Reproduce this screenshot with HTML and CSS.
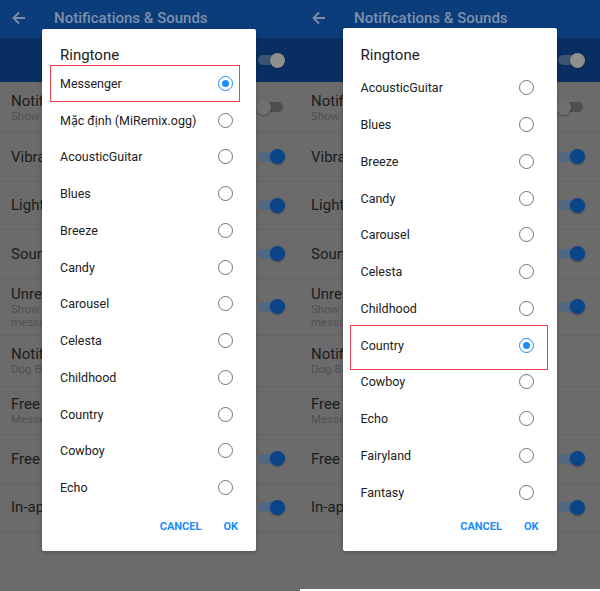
FILE: index.html
```html
<!DOCTYPE html>
<html lang="en">
<head>
  <meta charset="UTF-8">
  <meta name="viewport" content="width=device-width, initial-scale=1.0">
  <title>Ringtone picker</title>
  <link rel="stylesheet" href="styles.css">
</head>
<body>

  <div class="screens">

    <!-- Left screen: Messenger selected -->
    <div class="phone">
      <header class="appbar">
        <svg class="back" width="14" height="14" viewBox="0 0 14 14"><path d="M13 7H2M7 1.5L1.5 7 7 12.5" fill="none" stroke="currentColor" stroke-width="1.8"/></svg>
        <span class="appbar-title">Notifications &amp; Sounds</span>
      </header>
      <div class="master"><span class="switch switch-idle"></span></div>

      <ul class="prefs">
        <li class="pref pref-two">
          <div><div class="pref-title">Notifications</div><div class="pref-sub">Show notifications</div></div>
          <span class="switch switch-off"></span>
        </li>
        <li class="pref"><div class="pref-title">Vibrate</div><span class="switch"></span></li>
        <li class="pref"><div class="pref-title">Light</div><span class="switch"></span></li>
        <li class="pref"><div class="pref-title">Sound</div><span class="switch"></span></li>
        <li class="pref pref-three">
          <div><div class="pref-title">Unread count</div><div class="pref-sub">Show count of unread<br>messages on app icon</div></div>
          <span class="switch"></span>
        </li>
        <li class="pref pref-two">
          <div><div class="pref-title">Notification sound</div><div class="pref-sub">Dog Bark</div></div>
        </li>
        <li class="pref">
          <div><div class="pref-title">Free call ringtone</div><div class="pref-sub">Messenger</div></div>
        </li>
        <li class="pref"><div class="pref-title">Free call vibration</div><span class="switch"></span></li>
        <li class="pref"><div class="pref-title">In-app sounds</div><span class="switch"></span></li>
      </ul>

      <div class="dialog">
        <div class="dialog-title">Ringtone</div>
        <ul class="choices">
          <li class="choice"><span>Messenger</span><span class="radio radio-on"></span><span class="mark mark-first"></span></li>
          <li class="choice"><span>Mặc định (MiRemix.ogg)</span><span class="radio"></span></li>
          <li class="choice"><span>AcousticGuitar</span><span class="radio"></span></li>
          <li class="choice"><span>Blues</span><span class="radio"></span></li>
          <li class="choice"><span>Breeze</span><span class="radio"></span></li>
          <li class="choice"><span>Candy</span><span class="radio"></span></li>
          <li class="choice"><span>Carousel</span><span class="radio"></span></li>
          <li class="choice"><span>Celesta</span><span class="radio"></span></li>
          <li class="choice"><span>Childhood</span><span class="radio"></span></li>
          <li class="choice"><span>Country</span><span class="radio"></span></li>
          <li class="choice"><span>Cowboy</span><span class="radio"></span></li>
          <li class="choice"><span>Echo</span><span class="radio"></span></li>
        </ul>
        <div class="dialog-actions">
          <button class="action">CANCEL</button>
          <button class="action">OK</button>
        </div>
      </div>
    </div>

    <!-- Right screen: scrolled, Country selected -->
    <div class="phone phone-short">
      <header class="appbar">
        <svg class="back" width="14" height="14" viewBox="0 0 14 14"><path d="M13 7H2M7 1.5L1.5 7 7 12.5" fill="none" stroke="currentColor" stroke-width="1.8"/></svg>
        <span class="appbar-title">Notifications &amp; Sounds</span>
      </header>
      <div class="master"><span class="switch switch-idle"></span></div>

      <ul class="prefs">
        <li class="pref pref-two">
          <div><div class="pref-title">Notifications</div><div class="pref-sub">Show notifications</div></div>
          <span class="switch switch-off"></span>
        </li>
        <li class="pref"><div class="pref-title">Vibrate</div><span class="switch"></span></li>
        <li class="pref"><div class="pref-title">Light</div><span class="switch"></span></li>
        <li class="pref"><div class="pref-title">Sound</div><span class="switch"></span></li>
        <li class="pref pref-three">
          <div><div class="pref-title">Unread count</div><div class="pref-sub">Show count of unread<br>messages on app icon</div></div>
          <span class="switch"></span>
        </li>
        <li class="pref pref-two">
          <div><div class="pref-title">Notification sound</div><div class="pref-sub">Dog Bark</div></div>
        </li>
        <li class="pref">
          <div><div class="pref-title">Free call ringtone</div><div class="pref-sub">Messenger</div></div>
        </li>
        <li class="pref"><div class="pref-title">Free call vibration</div><span class="switch"></span></li>
        <li class="pref"><div class="pref-title">In-app sounds</div><span class="switch"></span></li>
      </ul>

      <div class="dialog dialog-up">
        <div class="dialog-title">Ringtone</div>
        <ul class="choices choices-scrolled">
          <li class="choice"><span>AcousticGuitar</span><span class="radio"></span></li>
          <li class="choice"><span>Blues</span><span class="radio"></span></li>
          <li class="choice"><span>Breeze</span><span class="radio"></span></li>
          <li class="choice"><span>Candy</span><span class="radio"></span></li>
          <li class="choice"><span>Carousel</span><span class="radio"></span></li>
          <li class="choice"><span>Celesta</span><span class="radio"></span></li>
          <li class="choice"><span>Childhood</span><span class="radio"></span></li>
          <li class="choice"><span>Country</span><span class="radio radio-on"></span><span class="mark mark-wide"></span></li>
          <li class="choice"><span>Cowboy</span><span class="radio"></span></li>
          <li class="choice"><span>Echo</span><span class="radio"></span></li>
          <li class="choice"><span>Fairyland</span><span class="radio"></span></li>
          <li class="choice"><span>Fantasy</span><span class="radio"></span></li>
        </ul>
        <div class="dialog-actions">
          <button class="action">CANCEL</button>
          <button class="action">OK</button>
        </div>
      </div>
    </div>

  </div>

</body>
</html>
```

FILE: styles.css
```css
body {
  margin: 0;
  padding: 0;
  background: #ffffff;
  font-family: Roboto, "Noto Sans", sans-serif;
}

.screens {
  display: flex;
  width: 600px;
  height: 591px;
}

.phone {
  width: 300px;
  height: 591px;
  background: #6b6b6b;
  position: relative;
  overflow: hidden;
  display: flex;
  flex-direction: column;
}

.phone-short {
  height: 589px;
}

/* dimmed app bar */
.appbar {
  height: 38px;
  flex-shrink: 0;
  background: #0b3d7b;
  color: #7b8fab;
  display: flex;
  align-items: center;
  padding-bottom: 3px;
  box-sizing: border-box;
}

.back {
  margin-left: 12px;
  width: 14px;
  height: 14px;
}

.appbar-title {
  margin-left: 28px;
  font-size: 15px;
  font-weight: 500;
}

.master {
  height: 44px;
  flex-shrink: 0;
  background: #092f62;
  display: flex;
  align-items: center;
  justify-content: flex-end;
  padding-right: 17px;
}

.prefs {
  list-style: none;
  margin: 0;
  padding: 0;
}

.pref {
  height: 48.5px;
  box-sizing: border-box;
  border-bottom: 1px solid #646464;
  display: flex;
  align-items: center;
  justify-content: space-between;
  padding: 0 17px 0 11px;
}

.pref-two {
  height: 51px;
}

.pref-three {
  height: 57px;
}

.pref-title {
  font-size: 15px;
  line-height: 18px;
  color: #1c1c1c;
}

.pref-sub {
  font-size: 11.5px;
  line-height: 13px;
  color: #525252;
}

/* toggles */
.switch {
  position: relative;
  width: 25px;
  height: 10px;
  border-radius: 5px;
  background: #4f6985;
  flex-shrink: 0;
}

.switch::after {
  content: "";
  position: absolute;
  top: -2.5px;
  right: -2px;
  width: 15px;
  height: 15px;
  border-radius: 50%;
  background: #0a4589;
  box-shadow: 0 1px 2px rgba(0, 0, 0, 0.3);
}

.switch-off {
  background: #4e4e4e;
}

.switch-off::after {
  right: auto;
  left: -2px;
  background: #707070;
}

.switch-idle {
  background: #3b5473;
}

.switch-idle::after {
  background: #8f8f8f;
}

/* dialog */
.dialog {
  position: absolute;
  top: 29px;
  left: 42px;
  width: 214px;
  background: #ffffff;
  border-radius: 2px;
  box-shadow: 0 1px 4px rgba(0, 0, 0, 0.25);
  display: flex;
  flex-direction: column;
}

.dialog-up {
  top: 28px;
  left: 42.5px;
}

.dialog-title {
  padding: 16px 18px 0;
  font-size: 15px;
  line-height: 20px;
  color: #212121;
}

.dialog-up .dialog-title {
  padding-top: 17px;
}

.choices {
  list-style: none;
  margin: 0;
  padding: 0;
  height: 443px;
  overflow: hidden;
}

.choices-scrolled {
  padding-top: 4.5px;
  box-sizing: border-box;
}

.choice {
  position: relative;
  height: 36.75px;
  display: flex;
  align-items: center;
  justify-content: space-between;
  padding: 0 23px 0 18px;
  font-size: 12.5px;
  color: #212121;
}

.radio {
  width: 15px;
  height: 15px;
  box-sizing: border-box;
  border: 1.7px solid #737373;
  border-radius: 50%;
  display: flex;
  align-items: center;
  justify-content: center;
}

.radio-on {
  border-color: #1a8cff;
}

.radio-on::after {
  content: "";
  width: 7px;
  height: 7px;
  border-radius: 50%;
  background: #1a8cff;
}

/* red annotation box */
.mark {
  position: absolute;
  border: 1.5px solid #e8434f;
}

.mark-first {
  top: -0.5px;
  left: 8px;
  right: 16px;
  height: 37px;
  box-sizing: border-box;
}

.mark-wide {
  top: -2px;
  left: 7px;
  right: 9px;
  height: 45px;
  box-sizing: border-box;
}

.dialog-actions {
  display: flex;
  justify-content: flex-end;
  gap: 22px;
  padding: 10px 18px 15px;
}

.action {
  border: none;
  background: none;
  padding: 0;
  font-family: Roboto, "Noto Sans", sans-serif;
  font-size: 11px;
  line-height: 18px;
  font-weight: 700;
  color: #1a8cff;
}
```
